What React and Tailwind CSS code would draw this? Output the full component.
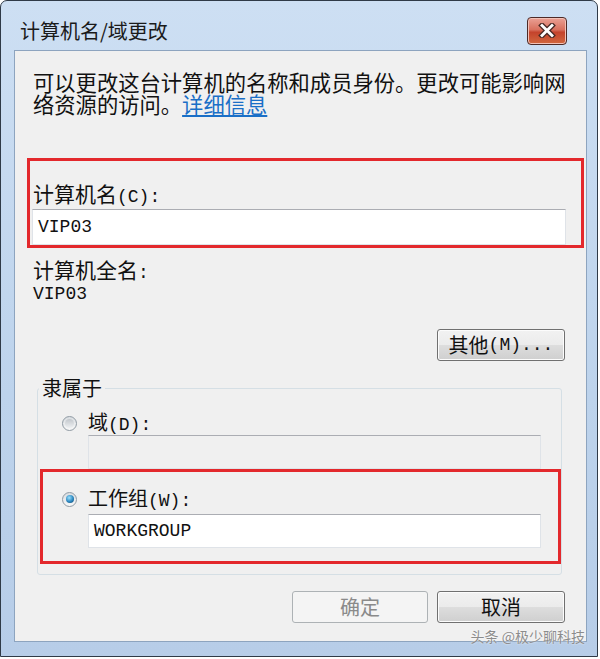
import React from 'react';

const cjk = "font-['Noto_Sans_CJK_SC',sans-serif]";
const mono = "font-['Liberation_Mono','Noto_Sans_CJK_SC',monospace] text-[18px]";

function Radio({ checked }) {
  return (
    <span className="w-[15px] h-[15px] rounded-full border border-[#8f9aa3] bg-[linear-gradient(#d9dde1,#f8f8f8)] flex items-center justify-center shrink-0">
      {checked ? (
        <span className="w-[8px] h-[8px] rounded-full bg-[radial-gradient(circle_at_40%_35%,#9be2ff,#2a86bf_55%,#0d3e61)]" />
      ) : (
        <span className="w-[9px] h-[9px] rounded-full bg-[linear-gradient(#c2c7cc,#eef0f2)]" />
      )}
    </span>
  );
}

function TextBox({ value, disabled, className }) {
  return (
    <div
      className={`${className} border border-[#dfe3e8] border-t-[#abadb3] flex items-center pl-[5px] ${disabled ? 'bg-[#f0f0f0] border-[#c3c6ca]' : 'bg-white'}`}
    >
      <span className={`${mono} text-[#111]`}>{value}</span>
    </div>
  );
}

function Button({ children, disabled, className }) {
  return (
    <button
      className={`${className} h-[32px] rounded-[3px] border flex items-center justify-center text-[20px] ${cjk} ${
        disabled
          ? 'border-[#adb2b5] bg-[#f4f4f4] text-[#8a8a8a]'
          : 'border-[#707070] bg-[linear-gradient(#f2f2f2_0%,#ebebeb_50%,#dddddd_51%,#cfcfcf_100%)] text-[#111] shadow-[inset_0_0_0_1px_#fcfcfc]'
      }`}
    >
      {children}
    </button>
  );
}

export default function App() {
  return (
    <div className="w-[600px] h-[659px] bg-white overflow-hidden">
      <div className="relative w-[598px] h-[657px] flex flex-col border border-[#2f3a47] rounded-t-[7px] bg-[linear-gradient(#cddff3,#bdd3ec_60%,#b7cde8)]">
        <div className="h-[49px] flex items-center justify-between pl-[19px] pr-[30px] pt-[10px]">
          <span className={`${cjk} text-[20px] text-[#1a1a1a] leading-[24px]`}>计算机名/域更改</span>
          <div className="w-[40px] h-[28px] rounded-[4px] border border-[#4d2a27] bg-[linear-gradient(#eaa195,#d8705e_45%,#c4432c_55%,#d1683f)] flex items-center justify-center shadow-[inset_0_0_0_1px_#f3c1b7]">
            <svg width="18" height="15" viewBox="0 0 18 15">
              <path d="M4 2.5 L14 12.5 M14 2.5 L4 12.5" stroke="#4a2a26" strokeWidth="5.4" strokeLinecap="square" />
              <path d="M4 2.5 L14 12.5 M14 2.5 L4 12.5" stroke="#fff" strokeWidth="2.8" strokeLinecap="square" />
            </svg>
          </div>
        </div>

        <div className="flex-1 ml-[13px] mr-[10px] bg-[#f0f0f0] border border-[#8da4bf] pl-[12px] pt-[20px] text-[#111]">
          <div className={`${cjk} ml-[6px] text-[21.3px] leading-[22px] whitespace-nowrap`}>
            <div>可以更改这台计算机的名称和成员身份。更改可能影响网</div>
            <div>
              络资源的访问。<span className="text-[#1a6fc7] underline">详细信息</span>
            </div>
          </div>

          <div className="mt-[43px] w-[557px] border-[3px] border-[#e3282c] pt-[20px]">
            <div className={`${cjk} ml-[3px] h-[24px] leading-[24px] text-[21px]`}>
              计算机名<span className={mono}>(C):</span>
            </div>
            <TextBox value="VIP03" className="mt-[4px] h-[36px] w-[534px] ml-[2px]" />
          </div>

          <div className={`${cjk} mt-[9px] ml-[6px] h-[24px] leading-[24px] text-[21px]`}>
            计算机全名<span className={mono}>:</span>
          </div>
          <div className={`${mono} mt-[2px] ml-[6px] h-[22px] leading-[22px]`}>VIP03</div>

          <div className="mt-[24px] w-[557px] flex justify-end pr-[19px]">
            <Button className="w-[128px]">
              其他<span className={mono}>(M)...</span>
            </Button>
          </div>

          <fieldset className="mt-[15px] ml-[10px] w-[523px] border border-[#d5dfe5] rounded-[3px] pb-[10px]">
            <legend className={`${cjk} ml-[1px] px-[3px] h-[24px] leading-[24px] text-[20px]`}>隶属于</legend>
            <div className="mt-[11px] h-[24px] flex items-center ml-[24px] gap-[11px]">
              <Radio />
              <span className={`${cjk} text-[20px] leading-[24px]`}>
                域<span className={mono}>(D):</span>
              </span>
            </div>
            <TextBox value="" disabled className="h-[34px] ml-[50px] w-[453px]" />
            <div className="ml-[2px] w-[521px] border-[3px] border-[#e3282c] pt-[15px] pb-[13px]">
              <div className="h-[24px] flex items-center ml-[19px] gap-[11px]">
                <Radio checked />
                <span className={`${cjk} text-[20px] leading-[24px]`}>
                  工作组<span className={mono}>(W):</span>
                </span>
              </div>
              <TextBox value="WORKGROUP" className="mt-[3px] h-[34px] ml-[45px] w-[453px]" />
            </div>
          </fieldset>

          <div className="mt-[16px] w-[557px] flex justify-end gap-[9px] pr-[19px]">
            <Button disabled className="w-[136px]">确定</Button>
            <Button className="w-[128px]">取消</Button>
          </div>
        </div>

        <div className="h-[14px]" />

        <div className={`absolute right-[12px] top-[625px] ${cjk} text-[14px] leading-[20px] text-[#8c8c8c] [text-shadow:0_0_2px_#fff]`}>
          头条 @极少聊科技
        </div>
      </div>
    </div>
  );
}
